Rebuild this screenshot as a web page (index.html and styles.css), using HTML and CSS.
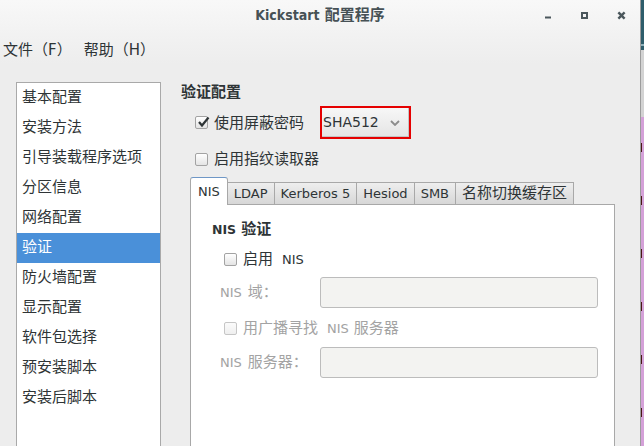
FILE: index.html
```html
<!DOCTYPE html>
<html lang="zh-CN">
<head>
<meta charset="utf-8">
<title>Kickstart 配置程序</title>
<link rel="stylesheet" href="styles.css">
</head>
<body>
<div class="screen">
  <div class="window">
    <div class="top">
      <header class="titlebar">
        <div class="title"><span class="title-lat">Kickstart</span> 配置程序</div>
        <svg class="controls" width="100" height="32" viewBox="0 0 100 32">
          <rect x="5" y="16.5" width="6" height="2" fill="#4b575c"/>
          <rect x="42" y="13" width="5" height="5" fill="none" stroke="#4b575c" stroke-width="2"/>
          <path d="M79.2 13.2 L83.8 17.8 M83.8 13.2 L79.2 17.8" stroke="#4b575c" stroke-width="2.4" stroke-linecap="square"/>
        </svg>
      </header>
      <nav class="menubar">
        <span class="menu-item">文件（F）</span>
        <span class="menu-item">帮助（H）</span>
      </nav>
    </div>
    <div class="main">
      <ul class="sidebar">
        <li class="item">基本配置</li>
        <li class="item">安装方法</li>
        <li class="item">引导装载程序选项</li>
        <li class="item">分区信息</li>
        <li class="item">网络配置</li>
        <li class="item selected">验证</li>
        <li class="item">防火墙配置</li>
        <li class="item">显示配置</li>
        <li class="item">软件包选择</li>
        <li class="item">预安装脚本</li>
        <li class="item">安装后脚本</li>
      </ul>
      <section class="content">
        <h2 class="heading">验证配置</h2>
        <div class="row row-shadow">
          <span class="check checked">
            <svg width="14" height="14" viewBox="0 0 14 14"><path d="M3 7 L6 10.5 L12.5 2.5" fill="none" stroke="#2e3436" stroke-width="2.2"/></svg>
          </span>
          <span class="label">使用屏蔽密码</span>
          <div class="combo-hl">
            <div class="combo">
              <span class="lat combo-text">SHA512</span>
              <svg class="chev" width="10" height="6" viewBox="0 0 10 6"><path d="M1 1 L5 5 L9 1" fill="none" stroke="#8c8c8c" stroke-width="1.8"/></svg>
            </div>
          </div>
        </div>
        <div class="row row-finger">
          <span class="check"></span>
          <span class="label">启用指纹读取器</span>
        </div>
        <div class="notebook">
          <div class="tabs">
            <span class="tab active"><span class="lat">NIS</span></span>
            <span class="tab"><span class="lat">LDAP</span></span>
            <span class="tab"><span class="lat">Kerberos 5</span></span>
            <span class="tab"><span class="lat">Hesiod</span></span>
            <span class="tab"><span class="lat">SMB</span></span>
            <span class="tab">名称切换缓存区</span>
          </div>
          <div class="page">
            <h3 class="page-heading"><span class="lat-b">NIS</span> 验证</h3>
            <div class="prow prow-enable">
              <span class="check small"></span>
              <span class="label">启用<span class="lat gap">NIS</span></span>
            </div>
            <div class="frow frow-first">
              <span class="flabel"><span class="lat">NIS</span><span class="cjk-gap">域：</span></span>
              <span class="entry"></span>
            </div>
            <div class="prow prow-bcast">
              <span class="check small disabled"></span>
              <span class="label dim">用广播寻找<span class="lat gap">NIS</span><span class="cjk-gap2">服务器</span></span>
            </div>
            <div class="frow frow-second">
              <span class="flabel"><span class="lat">NIS</span><span class="cjk-gap">服务器：</span></span>
              <span class="entry"></span>
            </div>
          </div>
        </div>
      </section>
    </div>
  </div>
  <div class="desk">
    <div class="d-teal"></div>
    <div class="d-line"></div>
    <div class="d-teal2"></div>
    <div class="d-gray"></div>
    <div class="d-purple">
      <span class="mark"></span><span class="mark"></span><span class="mark"></span>
      <span class="mark"></span><span class="mark"></span><span class="mark"></span>
    </div>
  </div>
</div>
</body>
</html>
```
FILE: styles.css
```css
* { box-sizing: border-box; }
html, body { margin: 0; padding: 0; }
body {
  width: 644px;
  height: 446px;
  overflow: hidden;
  font-family: "DejaVu Sans", "Noto Sans CJK SC", sans-serif;
  font-size: 15px;
  color: #2e3436;
  background: #ededed;
}
.screen { display: flex; width: 644px; height: 446px; }
.window {
  width: 640px;
  height: 446px;
  background: #ededed;
  display: flex;
  flex-direction: column;
  overflow: hidden;
}
.top { background: linear-gradient(#f8f8f8, #ededed); }
.titlebar { position: relative; height: 32px; }
.title {
  text-align: center;
  line-height: 30px;
  font-size: 15px;
  font-weight: bold;
  color: #465155;
  padding-left: 0;
}
.title-lat {
  font-family: "DejaVu Sans Condensed", "DejaVu Sans", sans-serif;
  font-stretch: condensed;
  font-size: 14px;
}
.controls { position: absolute; left: 540px; top: 0; }
.menubar {
  height: 32px;
  display: flex;
  align-items: center;
  gap: 12px;
  padding-left: 3px;
  padding-top: 1px;
  font-size: 15px;
}
.main { display: flex; flex: 1; padding-top: 18px; overflow: hidden; }
.sidebar {
  list-style: none;
  margin: 0 0 0 16px;
  padding: 0;
  width: 145px;
  height: 420px;
  flex: none;
  background: #fff;
  border: 1px solid #a9a9a9;
}
.item { height: 30px; line-height: 29px; padding-left: 5px; white-space: nowrap; }
.item.selected { background: #4a90d9; color: #fff; }
.content { margin-left: 20px; flex: 1; }
.heading {
  margin: 0;
  font-size: 15px;
  font-weight: bold;
  line-height: 20px;
}
.lat { font-size: 13px; }
.lat-b { font-size: 12.5px; font-weight: bold; }
.row { display: flex; align-items: center; padding-left: 14px; }
.row-shadow { margin-top: 4px; height: 33px; }
.row-finger { margin-top: 10px; height: 20px; }
.check {
  width: 13px;
  height: 13px;
  flex: none;
  border: 1px solid #a3a3a3;
  border-radius: 2px;
  background: linear-gradient(#ffffff, #e4e4e4);
  position: relative;
  margin-right: 6px;
}
.check svg { position: absolute; left: 0; top: -2px; }
.check.small { width: 13px; height: 13px; }
.check.disabled { border-color: #c6c6c6; background: linear-gradient(#fbfbfb, #efefef); }
.label { white-space: nowrap; line-height: 20px; }
.dim { color: #a3a3a3; }
.gap { margin-left: 9px; }
.cjk-gap { margin-left: 6px; }
.cjk-gap2 { margin-left: 5px; }
.combo-hl {
  margin-left: 16px;
  width: 91px;
  height: 33px;
  border: 2px solid #e50000;
}
.combo {
  height: 100%;
  display: flex;
  align-items: center;
  justify-content: space-between;
  padding: 0 8px 0 1px;
  background: linear-gradient(#f7f7f7, #e5e5e5);
  border-right: 1px solid #c4c4c4;
  border-bottom: 1px solid #c4c4c4;
}
.combo-text { font-size: 14px; color: #2e3436; }
.chev { margin-top: 1px; }
.notebook { margin: 8px 0 0 9px; width: 425px; }
.tabs {
  display: flex;
  align-items: flex-end;
  height: 28px;
  margin-bottom: -1px;
  position: relative;
  z-index: 1;
}
.tab {
  height: 23px;
  line-height: 21px;
  padding: 0 6px;
  border: 1px solid #a8a8a8;
  margin-left: -1px;
  background: linear-gradient(#eeeeee, #d7d7d7);
  white-space: nowrap;
}
.tab.active {
  margin-left: 0;
  height: 28px;
  line-height: 27px;
  padding: 0 7px;
  background: #fff;
  border-color: #a8a8a8;
  border-top-color: #6f97c6;
  border-bottom: none;
  border-radius: 3px 3px 0 0;
}
.page {
  height: 260px;
  background: #fff;
  border: 1px solid #a8a8a8;
  padding: 14px 0 0 21px;
}
.page-heading {
  margin: 0;
  font-size: 15px;
  font-weight: bold;
  line-height: 20px;
}
.prow { display: flex; align-items: center; height: 20px; padding-left: 12px; }
.prow-enable { margin-top: 9px; }
.prow-bcast { margin-top: 10px; }
.frow { display: flex; align-items: center; padding-left: 8px; }
.frow-first { margin-top: 8px; }
.frow-second { margin-top: 9px; }
.flabel { width: 100px; color: #a3a3a3; white-space: nowrap; line-height: 20px; }
.entry {
  width: 278px;
  height: 31px;
  border: 1px solid #bcbcbc;
  border-radius: 3px;
  background: #f3f3f1;
}
.desk {
  width: 4px;
  height: 446px;
  border-left: 1px solid #9c9c9c;
  display: flex;
  flex-direction: column;
}
.d-teal { height: 44px; background: #2e5d6b; }
.d-line { height: 2px; background: #8fb0ba; }
.d-teal2 { height: 4px; background: #2e5d6b; }
.d-gray { height: 67px; background: #d3d3d3; }
.d-purple {
  flex: 1;
  background: #d4a1d8;
  display: flex;
  flex-direction: column;
  padding-top: 26px;
  gap: 44px;
}
.mark { display: block; width: 1px; height: 9px; background: #4a1616; }
```
